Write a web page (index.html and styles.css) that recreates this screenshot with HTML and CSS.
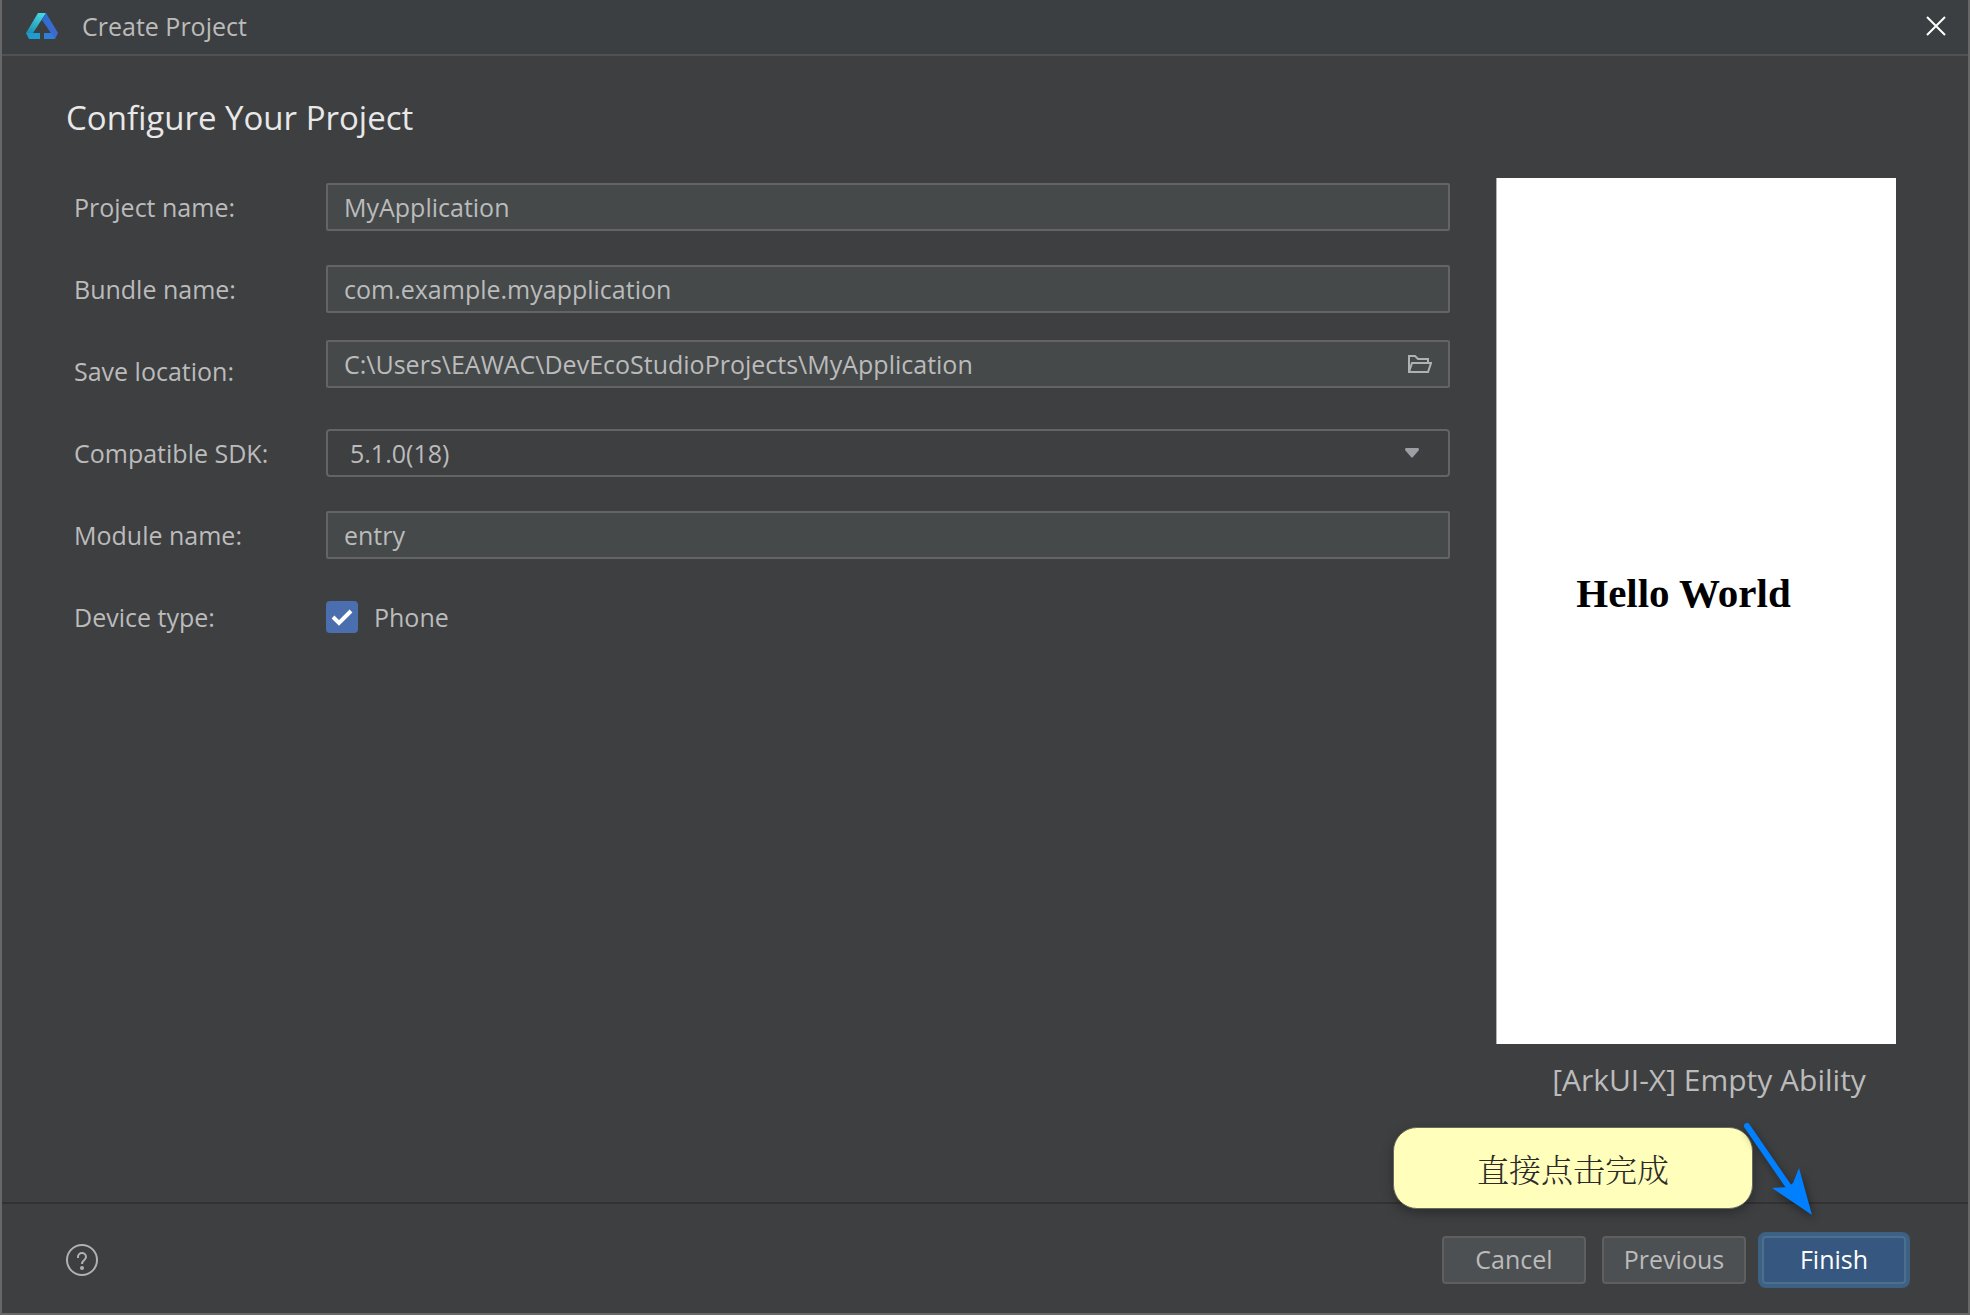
FILE: index.html
```html
<!DOCTYPE html>
<html lang="en">
<head>
    <meta charset="UTF-8">
    <meta name="viewport" content="width=device-width, initial-scale=1.0">
    <title>Create Project</title>
    <link rel="stylesheet" href="styles.css">
</head>
<body>
    <div class="window">
        <header class="titlebar">
            <svg class="logo" viewBox="0 0 32 26" aria-hidden="true">
                <defs>
                    <linearGradient id="logoLeft" x1="0.7" y1="0" x2="0.2" y2="1">
                        <stop offset="0" stop-color="#45d8e4"/>
                        <stop offset="1" stop-color="#1c8fb0"/>
                    </linearGradient>
                    <linearGradient id="logoRight" x1="0" y1="0" x2="1" y2="1">
                        <stop offset="0" stop-color="#2a6fd0"/>
                        <stop offset="1" stop-color="#4468d0"/>
                    </linearGradient>
                </defs>
                <path d="M12 0h8L7 20H0z" fill="url(#logoLeft)"/>
                <path d="M0 20h14v6H3z" fill="#1f9bcf"/>
                <path d="M18 20h10l1 6H18z" fill="#2f7fd6"/>
                <path d="M20 0l12 20-3 6-13-19z" fill="url(#logoRight)"/>
            </svg>
            <span class="titlebar-text">Create Project</span>
            <button class="close" type="button" aria-label="Close">
                <svg viewBox="0 0 20 20" aria-hidden="true"><path d="M1 1l18 18M19 1L1 19"/></svg>
            </button>
        </header>

        <main class="content">
            <h1>Configure Your Project</h1>
            <div class="columns">
                <form class="form" id="projectForm">
                    <div class="row">
                        <label for="projectName">Project name:</label>
                        <input class="field" type="text" id="projectName" value="MyApplication">
                    </div>
                    <div class="row">
                        <label for="bundleName">Bundle name:</label>
                        <input class="field" type="text" id="bundleName" value="com.example.myapplication">
                    </div>
                    <div class="row">
                        <label for="saveLocation">Save location:</label>
                        <div class="path">
                            <div class="field path-box">
                                <input class="path-input" type="text" id="saveLocation" value="C:\Users\EAWAC\DevEcoStudioProjects\MyApplication">
                                <button class="browse" type="button" aria-label="Browse">
                                    <svg viewBox="0 0 24 18" aria-hidden="true"><path d="M1 17V1h6l3 3h10v4M1 17L4 8h19l-3 9z"/></svg>
                                </button>
                            </div>
                        </div>
                    </div>
                    <div class="row">
                        <label for="sdk">Compatible SDK:</label>
                        <div class="select">
                            <select class="field" id="sdk">
                                <option>5.1.0(18)</option>
                            </select>
                            <svg class="arrow" viewBox="0 0 14 10" aria-hidden="true"><path d="M1 0h12q1 0 1 2L8 9q-1 1-2 0L0 2q0-2 1-2z"/></svg>
                        </div>
                    </div>
                    <div class="row">
                        <label for="moduleName">Module name:</label>
                        <input class="field" type="text" id="moduleName" value="entry">
                    </div>
                    <div class="row">
                        <span>Device type:</span>
                        <label class="check">
                            <input type="checkbox" checked>
                            Phone
                        </label>
                    </div>
                </form>

                <aside class="preview">
                    <div class="screen">Hello World</div>
                    <p class="caption">[ArkUI-X] Empty Ability</p>
                </aside>
            </div>
        </main>

        <footer class="footer">
            <button class="help" type="button" aria-label="Help">
                <svg viewBox="0 0 32 32" aria-hidden="true">
                    <circle cx="16" cy="16" r="15"/>
                    <path d="M12 14v-1a4 4 0 0 1 8 0c0 3-4 3-4 7"/>
                    <circle class="dot" cx="16" cy="24" r="2"/>
                </svg>
            </button>
            <button class="btn" type="button">Cancel</button>
            <button class="btn" type="button">Previous</button>
            <button class="btn btn-primary" type="submit" form="projectForm">Finish</button>

            <!-- tip bubble pointing at Finish -->
            <div class="tip">
                直接点击完成
                <svg class="tip-arrow" viewBox="0 0 72 96" aria-hidden="true">
                    <path class="shaft" d="M4 4L48 68"/>
                    <path d="M69 93L29 66L45 65L50 61L56 46z"/>
                </svg>
            </div>
        </footer>
    </div>
</body>
</html>
```

FILE: styles.css
```css
* {
    margin: 0;
    padding: 0;
    box-sizing: border-box;
}

body {
    font-family: "Open Sans", "Noto Sans", "Noto Sans CJK SC", sans-serif;
    font-size: 25px;
    color: #bbbbbb;
    background-color: #3e3f41;
}

input, select, button {
    font: inherit;
    color: inherit;
}

button {
    background: none;
    border: none;
}

.window {
    display: flex;
    flex-direction: column;
    min-height: 100vh;
    border: 2px solid #676767;
    border-top: none;
}

.titlebar {
    display: flex;
    align-items: center;
    height: 56px;
    padding: 0 22px 2px 24px;
    background-color: #3c3f41;
    border-bottom: 2px solid #515151;
}

.logo {
    width: 32px;
    height: 26px;
    margin-right: 24px;
}

.close {
    display: flex;
    margin-left: auto;
}

.close svg {
    width: 20px;
    height: 20px;
    stroke: #ffffff;
    stroke-width: 2;
}

.content {
    flex: 1;
    padding: 38px 72px 0 64px;
}

h1 {
    font-size: 33px;
    font-weight: 400;
    line-height: 48px;
    color: #e8e8e8;
}

.columns {
    display: flex;
    gap: 46px;
    padding-top: 24px;
}

.form {
    flex: 1;
    padding-left: 8px;
}

.row {
    display: grid;
    grid-template-columns: 252px 1fr;
    align-items: center;
    height: 82px;
}

.field {
    width: 100%;
    height: 48px;
    padding: 0 16px;
    background-color: #45494a;
    border: 2px solid #646464;
    border-radius: 2px;
}

.path {
    padding-bottom: 14px;
}

.path-box {
    display: flex;
    align-items: center;
}

.path-input {
    flex: 1;
    background: none;
    border: none;
}

.browse {
    display: flex;
}

.browse svg {
    width: 24px;
    height: 18px;
    fill: none;
    stroke: #afb1b3;
    stroke-width: 2;
}

.select {
    position: relative;
}

.select .field {
    display: block;
    padding: 0 22px;
    appearance: none;
    background-color: #3e3f41;
    border-radius: 4px;
}

.arrow {
    position: absolute;
    top: 19px;
    right: 31px;
    width: 14px;
    height: 10px;
    fill: #9c9fa3;
    pointer-events: none;
}

.check {
    display: flex;
    align-items: center;
    gap: 16px;
}

.check input {
    width: 32px;
    height: 32px;
    appearance: none;
    border-radius: 4px;
    background: #4b6eaf url("data:image/svg+xml,%3Csvg xmlns='http://www.w3.org/2000/svg' viewBox='0 0 32 32'%3E%3Cpath d='M7 16l6 6L25 10' fill='none' stroke='white' stroke-width='4'/%3E%3C/svg%3E");
}

.preview {
    width: 400px;
    padding-top: 12px;
}

.screen {
    display: flex;
    align-items: center;
    justify-content: center;
    height: 866px;
    padding: 0 26px 36px 0;
    background-color: #ffffff;
    border-left: 1px solid #afb1b3;
    color: #000000;
    font-family: "Liberation Serif", serif;
    font-size: 41px;
    font-weight: bold;
}

.caption {
    padding: 16px 0 0 26px;
    font-size: 30px;
    line-height: 40px;
    text-align: center;
}

.footer {
    position: relative;
    display: flex;
    align-items: center;
    gap: 16px;
    height: 111px;
    padding: 2px 62px 0 64px;
    border-top: 2px solid #323232;
}

.help {
    display: flex;
    margin-right: auto;
}

.help svg {
    width: 32px;
    height: 32px;
    fill: none;
    stroke: #afb1b3;
    stroke-width: 2;
}

.help .dot {
    fill: #afb1b3;
    stroke: none;
}

.btn {
    width: 144px;
    height: 48px;
    padding-bottom: 2px;
    background-color: #4c5052;
    border: 2px solid #5e6060;
    border-radius: 4px;
}

.btn-primary {
    color: #ffffff;
    background-color: #365880;
    border-color: #4c708c;
    box-shadow: 0 0 0 4px #3d6185;
}

.tip {
    position: absolute;
    top: -77px;
    right: 215px;
    width: 360px;
    height: 82px;
    border: 1px solid #6a6a5c;
    border-radius: 24px;
    background-color: #ffffbb;
    box-shadow: 0 4px 12px rgba(0, 0, 0, 0.3);
    color: #2b2b2b;
    font-family: "Noto Serif CJK SC", "Noto Sans CJK SC", serif;
    font-size: 32px;
    font-weight: 300;
    line-height: 80px;
    text-align: center;
}

.tip-arrow {
    position: absolute;
    top: -6px;
    left: 349px;
    width: 72px;
    height: 96px;
    fill: #0080ff;
    filter: drop-shadow(2px 4px 4px rgba(0, 0, 0, 0.4));
}

.tip-arrow .shaft {
    stroke: #0080ff;
    stroke-width: 6;
    stroke-linecap: round;
}
```
